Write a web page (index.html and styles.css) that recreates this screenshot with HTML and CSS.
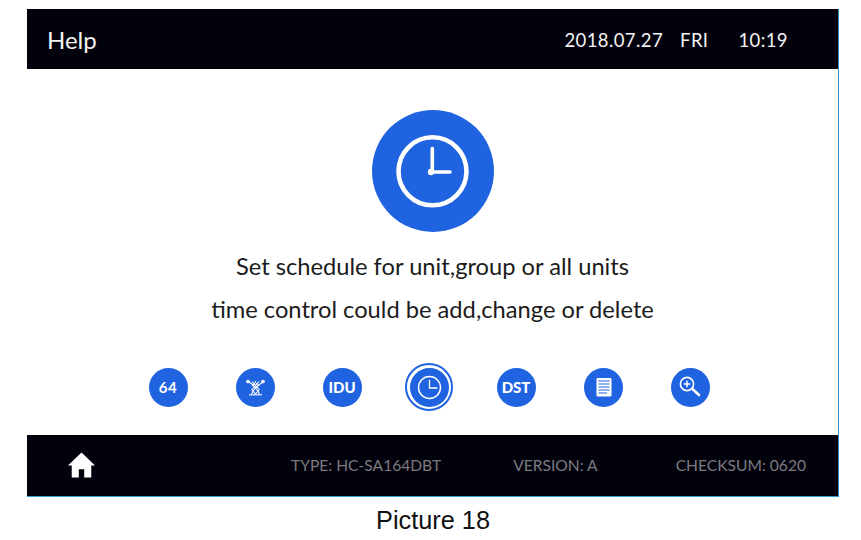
FILE: index.html
```html
<!DOCTYPE html>
<html lang="en">
<head>
    <meta charset="UTF-8">
    <meta name="viewport" content="width=device-width, initial-scale=1.0">
    <title>Help</title>
    <link rel="stylesheet" href="styles.css">
</head>
<body>
    <div class="screen">
        <header class="top-bar">
            <h1 class="title">Help</h1>
            <div class="clock">
                <span>2018.07.27</span>
                <span>FRI</span>
                <span>10:19</span>
            </div>
        </header>
        <main class="content">
            <div class="hero">
                <svg viewBox="0 0 122 122" width="122" height="122">
                    <circle cx="60.5" cy="61.3" r="34" fill="none" stroke="#fff" stroke-width="4.6"/>
                    <path d="M60.3 38.5V62H78" fill="none" stroke="#fff" stroke-width="3.6" stroke-linecap="round" stroke-linejoin="round"/>
                    <circle cx="59" cy="62" r="3.2" fill="#fff"/>
                </svg>
            </div>
            <p class="line line-first">Set schedule for unit,group or all units</p>
            <p class="line">time control could be add,change or delete</p>
            <div class="icons">
                <div class="cell"><span class="dot dot-text">64</span></div>
                <div class="cell">
                    <span class="dot">
                        <svg viewBox="0 0 39 39" width="39" height="39" fill="none" stroke="#fff" stroke-width="1.1">
                            <path d="M13 14C15 15 18 18 19.5 20C21 22 23 24 23.5 26.5M27 14C25 15 22 18 19.5 20C18 22 16 24 15.5 26.5"/>
                            <path d="M16 13.5L23.5 22M23 13.5L15.5 22M16 18L20 13.5M23 18L19 13.5M16 22L19.5 26M23 22L19.5 26"/>
                            <path d="M13 26.8H26"/>
                            <circle cx="12" cy="13.5" r="1.3" fill="#fff"/>
                            <circle cx="27" cy="13.5" r="1.3" fill="#fff"/>
                        </svg>
                    </span>
                </div>
                <div class="cell"><span class="dot dot-text dot-heavy">IDU</span></div>
                <div class="cell">
                    <span class="ring">
                        <span class="dot">
                            <svg viewBox="0 0 39 39" width="39" height="39" fill="none" stroke="#fff">
                                <circle cx="19.5" cy="19.5" r="11" stroke-width="1.4"/>
                                <path d="M19.5 12.5V20H27" stroke-width="1.3" stroke-linecap="round"/>
                            </svg>
                        </span>
                    </span>
                </div>
                <div class="cell"><span class="dot dot-text dot-heavy">DST</span></div>
                <div class="cell">
                    <span class="dot">
                        <svg viewBox="0 0 39 39" width="39" height="39">
                            <rect x="12.5" y="10" width="15" height="18.5" rx="1" fill="#fff"/>
                            <path d="M14.5 13H25.5M14.5 16H25.5M14.5 19H25.5M14.5 22H25.5M14.5 25H23" stroke="#1f63e0" stroke-width="1"/>
                        </svg>
                    </span>
                </div>
                <div class="cell">
                    <span class="dot">
                        <svg viewBox="0 0 39 39" width="39" height="39" fill="none" stroke="#fff">
                            <circle cx="16" cy="16" r="6.6" stroke-width="1.6"/>
                            <path d="M16 12.8V19.2M12.8 16H19.2" stroke-width="1.5"/>
                            <path d="M21.5 21L28 27" stroke-width="2.6" stroke-linecap="round"/>
                        </svg>
                    </span>
                </div>
            </div>
        </main>
        <footer class="bottom-bar">
            <svg class="home" viewBox="0 0 26 26" width="27" height="27">
                <path d="M13 1.5L26 14H22.4V25.5H15.6V17.5H10.4V25.5H3.6V14H0Z" fill="#fff"/>
            </svg>
            <div class="info">
                <span class="info-type">TYPE: HC-SA164DBT</span>
                <span class="info-version">VERSION: A</span>
                <span class="info-sum">CHECKSUM: 0620</span>
            </div>
        </footer>
    </div>
    <p class="caption">Picture 18</p>
</body>
</html>
```

FILE: styles.css
```css
html, body {
    margin: 0;
    padding: 0;
    background: #fff;
}
body {
    width: 861px;
    height: 540px;
    overflow: hidden;
    padding-top: 9px;
    box-sizing: border-box;
    font-family: Lato, "Open Sans", sans-serif;
}
.screen {
    width: 812px;
    height: 488px;
    margin-left: 27px;
    box-sizing: border-box;
    border-right: 1px solid #2f8fcb;
    border-bottom: 1px solid #2f9bd6;
    display: flex;
    flex-direction: column;
}
.top-bar {
    height: 60px;
    background: #02020d;
    color: #f2f2f2;
    display: flex;
    align-items: center;
    justify-content: space-between;
    padding: 0 50px 0 20px;
}
.title {
    margin: 0;
    font-size: 24px;
    font-weight: 400;
}
.clock {
    display: flex;
    gap: 17px;
    font-size: 18.5px;
    letter-spacing: 0.4px;
    padding-top: 2px;
}
.clock span:last-child {
    margin-left: 13px;
}
.content {
    flex: 1;
    display: flex;
    flex-direction: column;
    align-items: center;
    padding-top: 41px;
    color: #1c1c1c;
}
.hero {
    width: 122px;
    height: 122px;
    border-radius: 50%;
    background: #1f63e0;
}
.hero svg {
    display: block;
}
.line {
    margin: 0;
    height: 43px;
    line-height: 43px;
    font-size: 23.7px;
    white-space: nowrap;
}
.line-first {
    margin-top: 13px;
}
.icons {
    display: grid;
    grid-template-columns: repeat(7, 87px);
    margin-top: 31px;
    margin-right: 7px;
}
.cell {
    height: 50px;
    display: flex;
    align-items: center;
    justify-content: center;
}
.dot {
    width: 39px;
    height: 39px;
    border-radius: 50%;
    background: #1f63e0;
    color: #fff;
    display: flex;
    align-items: center;
    justify-content: center;
}
.dot svg {
    display: block;
}
.dot-text {
    font-size: 15px;
    font-weight: 700;
    letter-spacing: 0.5px;
}
.dot-heavy {
    font-weight: 900;
    letter-spacing: 0;
}
.ring {
    width: 48px;
    height: 48px;
    box-sizing: border-box;
    border: 2px solid #1f63e0;
    border-radius: 50%;
    display: flex;
    align-items: center;
    justify-content: center;
}
.bottom-bar {
    height: 61px;
    box-sizing: border-box;
    padding: 0 0 2px 41px;
    background: #02020d;
    display: flex;
    align-items: center;
}
.home {
    display: block;
}
.info {
    flex: 1;
    display: flex;
    align-items: center;
    color: #7b7b7f;
    font-size: 15.6px;
    padding-left: 196px;
}
.info-version {
    margin-left: 72px;
}
.info-sum {
    margin-left: 78px;
}
.caption {
    margin: 9px 0 0;
    width: 866px;
    text-align: center;
    font-family: "Liberation Sans", Arial, sans-serif;
    font-size: 25.3px;
    color: #111;
}
```
